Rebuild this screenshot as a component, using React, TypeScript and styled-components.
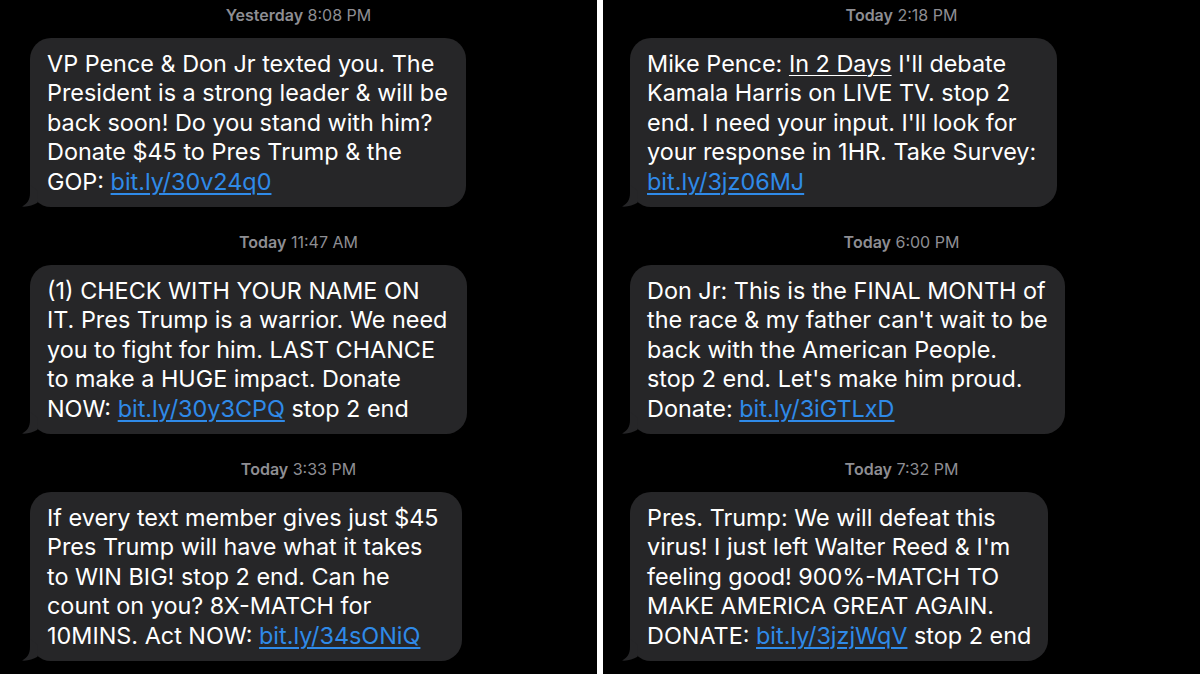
import React from "react";
import styled, { createGlobalStyle } from "styled-components";

const Global = createGlobalStyle`
  html, body { margin: 0; padding: 0; background: #000; }
  body { font-family: Inter, "Liberation Sans", Arial, sans-serif; -webkit-font-smoothing: antialiased; }
`;

const Page = styled.div`
  display: grid;
  grid-template-columns: 597px 6px 1fr;
  width: 1200px;
  height: 674px;
  background: #000;
  overflow: hidden;
`;

const Divider = styled.div`
  background: #fff;
`;

const Panel = styled.div<{ $inset: number }>`
  display: flex;
  flex-direction: column;
  gap: 25px;
  padding: 5px 0 0 ${(p) => p.$inset}px;
`;

const Section = styled.section`
  display: flex;
  flex-direction: column;
  align-items: flex-start;
`;

const Stamp = styled.div<{ $center: number }>`
  align-self: stretch;
  text-align: center;
  margin-left: ${(p) => p.$center}px;
  height: 20px;
  line-height: 20px;
  margin-bottom: 13px;
  font-size: 16px;
  color: #8e8e93;
  b { font-weight: 600; }
`;

const Bubble = styled.div<{ $w: number }>`
  position: relative;
  box-sizing: border-box;
  width: ${(p) => p.$w}px;
  padding: 11px 0 11px 17px;
  background: #262628;
  border-radius: 21px;
  color: #fff;
  font-size: 23.4px;
  line-height: 29.4px;
  white-space: nowrap;
`;

const Tail = styled.svg`
  position: absolute;
  left: -8px;
  bottom: 0;
  width: 30px;
  height: 24px;
`;

const Line = styled.div``;

const Link = styled.span`
  color: #2f8ae8;
  text-decoration: underline;
  text-underline-offset: 3px;
  text-decoration-thickness: 1.5px;
`;

const Under = styled.span`
  text-decoration: underline;
  text-underline-offset: 3px;
  text-decoration-thickness: 1px;
`;

type Msg = { day: string; time: string; w: number; lines: React.ReactNode[] };

const left: Msg[] = [
  {
    day: "Yesterday",
    time: "8:08 PM",
    w: 436,
    lines: [
      "VP Pence & Don Jr texted you. The",
      "President is a strong leader & will be",
      "back soon! Do you stand with him?",
      "Donate $45 to Pres Trump & the",
      <>GOP: <Link>bit.ly/30v24q0</Link></>,
    ],
  },
  {
    day: "Today",
    time: "11:47 AM",
    w: 437,
    lines: [
      "(1) CHECK WITH YOUR NAME ON",
      "IT. Pres Trump is a warrior. We need",
      "you to fight for him. LAST CHANCE",
      "to make a HUGE impact. Donate",
      <>NOW: <Link>bit.ly/30y3CPQ</Link> stop 2 end</>,
    ],
  },
  {
    day: "Today",
    time: "3:33 PM",
    w: 432,
    lines: [
      "If every text member gives just $45",
      "Pres Trump will have what it takes",
      "to WIN BIG! stop 2 end. Can he",
      "count on you? 8X-MATCH for",
      <>10MINS. Act NOW: <Link>bit.ly/34sONiQ</Link></>,
    ],
  },
];

const right: Msg[] = [
  {
    day: "Today",
    time: "2:18 PM",
    w: 427,
    lines: [
      <>Mike Pence: <Under>In 2 Days</Under> I'll debate</>,
      "Kamala Harris on LIVE TV. stop 2",
      "end. I need your input. I'll look for",
      "your response in 1HR. Take Survey:",
      <Link>bit.ly/3jz06MJ</Link>,
    ],
  },
  {
    day: "Today",
    time: "6:00 PM",
    w: 435,
    lines: [
      "Don Jr: This is the FINAL MONTH of",
      "the race & my father can't wait to be",
      "back with the American People.",
      "stop 2 end. Let's make him proud.",
      <>Donate: <Link>bit.ly/3iGTLxD</Link></>,
    ],
  },
  {
    day: "Today",
    time: "7:32 PM",
    w: 418,
    lines: [
      "Pres. Trump: We will defeat this",
      "virus! I just left Walter Reed & I'm",
      "feeling good! 900%-MATCH TO",
      "MAKE AMERICA GREAT AGAIN.",
      <>DONATE: <Link>bit.ly/3jzjWqV</Link> stop 2 end</>,
    ],
  },
];

const TailShape = () => (
  <Tail viewBox="0 0 30 24">
    <path
      d="M8 2 L8 10 C8 17 5 21 0 23.6 C6 24 11 22.5 15.5 19.8 L16 8 Z"
      fill="#262628"
    />
  </Tail>
);

const Column = ({ msgs, inset }: { msgs: Msg[]; inset: number }) => (
  <Panel $inset={inset}>
    {msgs.map((m, i) => (
      <Section key={i}>
        <Stamp $center={-inset}>
          <b>{m.day}</b> {m.time}
        </Stamp>
        <Bubble $w={m.w}>
          <TailShape />
          {m.lines.map((l, j) => (
            <Line key={j}>{l}</Line>
          ))}
        </Bubble>
      </Section>
    ))}
  </Panel>
);

export default function App() {
  return (
    <>
      <Global />
      <Page>
        <Column msgs={left} inset={30} />
        <Divider />
        <Column msgs={right} inset={27} />
      </Page>
    </>
  );
}
